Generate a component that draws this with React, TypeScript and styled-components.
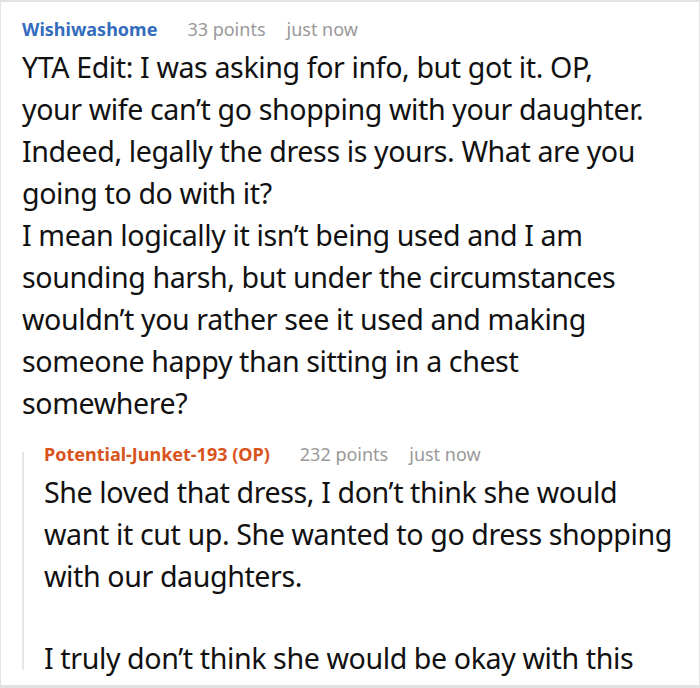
import React from 'react';
import styled, { createGlobalStyle } from 'styled-components';

const GlobalStyle = createGlobalStyle`
    html, body {
        margin: 0;
        padding: 0;
        background: #ffffff;
    }
    body {
        font-family: 'Noto Sans', 'Open Sans', sans-serif;
    }
`

type CommentData = {
    author: string;
    op?: boolean;
    points: number;
    time: string;
    paragraphs: string[];
};

const parent: CommentData = {
    author: 'Wishiwashome',
    points: 33,
    time: 'just now',
    paragraphs: [
        'YTA Edit: I was asking for info, but got it. OP, your wife can\u2019t go shopping with your daughter. Indeed, legally the dress is yours. What are you going to do with it?\nI mean logically it isn\u2019t being used and I am sounding harsh, but under the circumstances wouldn\u2019t you rather see it used and making someone happy than sitting in a chest somewhere?',
    ],
};

const reply: CommentData = {
    author: 'Potential-Junket-193 (OP)',
    op: true,
    points: 232,
    time: 'just now',
    paragraphs: [
        'She loved that dress, I don\u2019t think she would want it cut up. She wanted to go dress shopping with our daughters.',
        'I truly don\u2019t think she would be okay with this',
    ],
};

const Comment = ({ data, children }: { data: CommentData; children?: React.ReactNode }) => (
    <StyledComment>
        <Meta>
            <Author $op={data.op}>{data.author}</Author>
            <Info>{data.points} points</Info>
            <Info>{data.time}</Info>
        </Meta>
        {data.paragraphs.map((p, i) => (
            <Body key={i}>{p}</Body>
        ))}
        {children}
    </StyledComment>
);

export default function App() {
    return (
        <>
            <GlobalStyle />
            <Frame>
                <Comment data={parent}>
                    <Replies>
                        <Comment data={reply} />
                    </Replies>
                </Comment>
            </Frame>
        </>
    );
}

const Frame = styled.div`
    box-sizing: border-box;
    width: 700px;
    height: 688px;
    overflow: hidden;
    border: 1px solid #e2e2e2;
    border-top-width: 2px;
    border-bottom-width: 3px;
    padding: 15px 8px 0 21px;
`

const StyledComment = styled.div`
    display: flex;
    flex-direction: column;
`

const Meta = styled.div`
    display: flex;
    align-items: baseline;
    font-size: 18px;
    line-height: 24px;
    margin-bottom: 5px;
`

const Author = styled.span<{ $op?: boolean }>`
    font-weight: 700;
    color: ${props => props.$op ? '#d8541c' : '#336bbd'};
    margin-right: 30px;
`

const Info = styled.span`
    color: #999999;

    & + & {
        margin-left: 21px;
    }
`

const Body = styled.p`
    max-width: 632px;
    margin: 0;
    font-size: 28.6px;
    letter-spacing: -0.4px;
    line-height: 42px;
    color: #111111;
    white-space: pre-line;

    & + & {
        margin-top: 40px;
    }
`

const Replies = styled.div`
    position: relative;
    margin-top: 18px;
    padding-left: 22px;

    &::before {
        content: '';
        position: absolute;
        left: 0;
        top: 10px;
        bottom: 9px;
        width: 2px;
        background: #e6e6e6;
    }
`
